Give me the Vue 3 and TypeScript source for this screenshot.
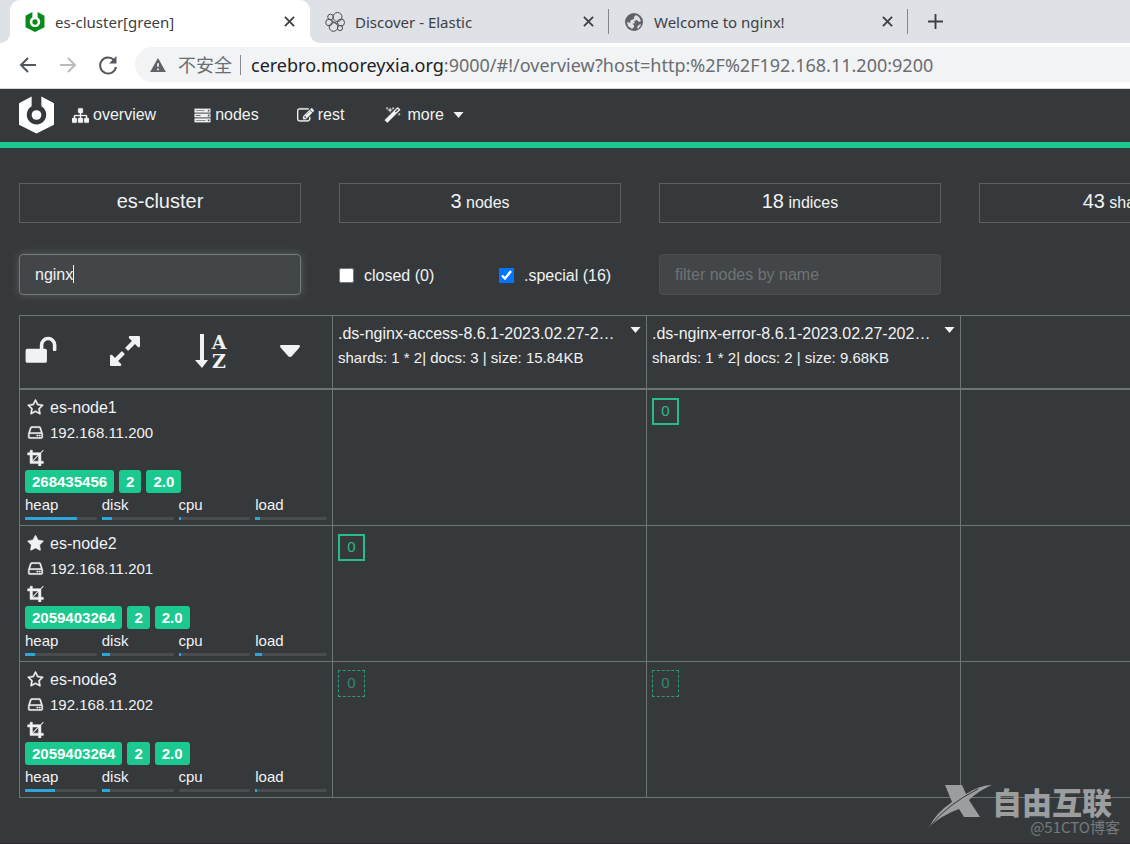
<script setup lang="ts">
import { ref } from 'vue'

interface Meter { label: string; value: number }
interface EsNode {
  name: string
  master: boolean
  ip: string
  tags: string[]
  meters: Meter[]
  shards: Array<'primary' | 'replica' | null>
}

const icons: Record<string, string> = {
  sitemap: 'M1792 1248v320q0 40-28 68t-68 28h-320q-40 0-68-28t-28-68v-320q0-40 28-68t68-28h96v-192h-512v192h96q40 0 68 28t28 68v320q0 40-28 68t-68 28h-320q-40 0-68-28t-28-68v-320q0-40 28-68t68-28h96v-192h-512v192h96q40 0 68 28t28 68v320q0 40-28 68t-68 28h-320q-40 0-68-28t-28-68v-320q0-40 28-68t68-28h96v-192q0-52 38-90t90-38h512v-192h-96q-40 0-68-28t-28-68v-320q0-40 28-68t68-28h320q40 0 68 28t28 68v320q0 40-28 68t-68 28h-96v192h512q52 0 90 38t38 90v192h96q40 0 68 28t28 68z',
  server: 'M64 192H1728V576H64ZM192 340V428H1088V340ZM1456 290V478H1640V290ZM64 704H1728V1088H64ZM192 852V940H704V852ZM1456 802V990H1640V802ZM64 1216H1728V1600H64ZM192 1364V1452H1216V1364ZM1456 1314V1502H1640V1314Z',
  edit: 'M888 1184l116-116-152-152-116 116v56h96v96h56zm440-720q-16-16-33 1l-350 350q-17 17-1 33t33-1l350-350q17-17 1-33zm80 594v190q0 119-84.5 203.5t-203.5 84.5h-832q-119 0-203.5-84.5t-84.5-203.5v-832q0-119 84.5-203.5t203.5-84.5h832q63 0 117 25 15 7 18 23 3 17-9 29l-49 49q-14 14-32 8-23-6-45-6h-832q-66 0-113 47t-47 113v832q0 66 47 113t113 47h832q66 0 113-47t47-113v-126q0-13 9-22l64-64q15-15 35-7t20 29zm-96-738l288 288-672 672h-288v-288zm444 132l-92 92-288-288 92-92q28-28 68-28t68 28l152 152q28 28 28 68t-28 68z',
  magic: 'M1254 581l293-293-107-107-293 293zm447-293q0 27-18 45l-1286 1286q-18 18-45 18t-45-18l-198-198q-18-18-18-45t18-45l1286-1286q18-18 45-18t45 18l198 198q18 18 18 45zm-1351-190l98 30-98 30-30 98-30-98-98-30 98-30 30-98zm350 162l196 60-196 60-60 196-60-196-196-60 196-60 60-196zm930 478l98 30-98 30-30 98-30-98-98-30 98-30 30-98zm-640-640l98 30-98 30-30 98-30-98-98-30 98-30 30-98z',
  unlock: 'M1728 576v256q0 26-19 45t-45 19h-64q-26 0-45-19t-19-45v-256q0-106-75-181t-181-75-181 75-75 181v192h96q40 0 68 28t28 68v576q0 40-28 68t-68 28h-960q-40 0-68-28t-28-68v-576q0-40 28-68t68-28h672v-192q0-185 131.5-316.5t316.5-131.5 316.5 131.5 131.5 316.5z',
  expand: 'M883 1056q0 13-10 23l-332 332 144 144q19 19 19 45t-19 45-45 19h-448q-26 0-45-19t-19-45v-448q0-26 19-45t45-19 45 19l144 144 332-332q10-10 23-10t23 10l114 114q10 10 10 23zm781-864v448q0 26-19 45t-45 19-45-19l-144-144-332 332q-10 10-23 10t-23-10l-114-114q-10-10-10-23t10-23l332-332-144-144q-19-19-19-45t19-45 45-19h448q26 0 45 19t19 45z',
  starO: 'M1201 1004l306-297-422-62-189-382-189 382-422 62 306 297-73 421 378-199 377 199zm527-357q0 22-26 48l-363 354 86 500q1 7 1 20 0 50-41 50-19 0-40-12l-449-236-449 236q-22 12-40 12-21 0-31.5-14.5t-10.5-35.5q0-6 2-20l86-500-364-354q-25-27-25-48 0-37 56-46l502-73 225-455q19-41 49-41t49 41l225 455 502 73q56 9 56 46z',
  star: 'M1728 647q0 22-26 48l-363 354 86 500q1 7 1 20 0 21-10.5 35.5t-30.5 14.5q-19 0-40-12l-449-236-449 236q-22 12-40 12-21 0-31.5-14.5t-10.5-35.5q0-6 2-20l86-500-364-354q-25-27-25-48 0-37 56-46l502-73 225-455q19-41 49-41t49 41l225 455 502 73q56 9 56 46z',
  hdd: 'M1168 1216q0 33-23.5 56.5t-56.5 23.5-56.5-23.5-23.5-56.5 23.5-56.5 56.5-23.5 56.5 23.5 23.5 56.5zm256 0q0 33-23.5 56.5t-56.5 23.5-56.5-23.5-23.5-56.5 23.5-56.5 56.5-23.5 56.5 23.5 23.5 56.5zm112 160v-320q0-13-9.5-22.5t-22.5-9.5h-1216q-13 0-22.5 9.5t-9.5 22.5v320q0 13 9.5 22.5t22.5 9.5h1216q13 0 22.5-9.5t9.5-22.5zm-1230-480h1180l-157-482q-4-13-16-21.5t-26-8.5h-782q-14 0-26 8.5t-16 21.5zm1358 160v320q0 66-47 113t-113 47h-1216q-66 0-113-47t-47-113v-320q0-25 16-75l197-606q17-53 63-86t101-33h782q55 0 101 33t63 86l197 606q16 50 16 75z',
  crop: 'M621 1280h595v-595zm-45-45l595-595h-595v595zm1152 77v192q0 14-9 23t-23 9h-224v224q0 14-9 23t-23 9h-192q-14 0-23-9t-9-23v-224h-864q-14 0-23-9t-9-23v-864h-224q-14 0-23-9t-9-23v-192q0-14 9-23t23-9h224v-224q0-14 9-23t23-9h192q14 0 23 9t9 23v224h851l246-247q10-9 23-9t23 9q9 10 9 23t-9 23l-247 246v851h224q14 0 23 9t9 23z',
}

const tabs = [
  { title: 'es-cluster[green]', icon: 'cerebro', active: true },
  { title: 'Discover - Elastic', icon: 'elastic', active: false },
  { title: 'Welcome to nginx!', icon: 'globe', active: false },
]

const links = [
  { text: 'overview', icon: 'sitemap' },
  { text: 'nodes', icon: 'server' },
  { text: 'rest', icon: 'edit' },
]

const stats = [
  { count: '3', unit: 'nodes' },
  { count: '18', unit: 'indices' },
  { count: '43', unit: 'shards' },
]

const indices = [
  { name: '.ds-nginx-access-8.6.1-2023.02.27-2…', info: 'shards: 1 * 2| docs: 3 | size: 15.84KB' },
  { name: '.ds-nginx-error-8.6.1-2023.02.27-202…', info: 'shards: 1 * 2| docs: 2 | size: 9.68KB' },
]

const meters = (heap: number, disk: number, cpu: number, load: number): Meter[] => [
  { label: 'heap', value: heap },
  { label: 'disk', value: disk },
  { label: 'cpu', value: cpu },
  { label: 'load', value: load },
]

const nodes: EsNode[] = [
  { name: 'es-node1', master: false, ip: '192.168.11.200', tags: ['268435456', '2', '2.0'], meters: meters(73, 14, 3, 6), shards: [null, 'primary'] },
  { name: 'es-node2', master: true, ip: '192.168.11.201', tags: ['2059403264', '2', '2.0'], meters: meters(14, 12, 3, 9), shards: ['primary', null] },
  { name: 'es-node3', master: false, ip: '192.168.11.202', tags: ['2059403264', '2', '2.0'], meters: meters(42, 12, 0, 3), shards: ['replica', 'replica'] },
]

const indexFilter = ref('nginx')
const nodeFilter = ref('')
const closed = ref(false)
const special = ref(true)
</script>

<template>
  <div class="page">
    <header class="browser">
      <div class="tabs">
        <div v-for="tab in tabs" :key="tab.title" class="tab" :class="{ active: tab.active }">
          <svg v-if="tab.icon === 'cerebro'" class="favicon" viewBox="0 0 36 38">
            <path fill="#0b8a1c" d="M13 0v10a10 10 0 1 0 10 0V0l13 7v22l-18 9L0 29V7z" />
            <circle cx="18" cy="19" r="5" fill="#0b8a1c" />
          </svg>
          <svg v-else-if="tab.icon === 'elastic'" class="favicon outline" viewBox="0 0 20 20">
            <circle cx="12.500" cy="5" r="4.500" />
            <circle cx="5.500" cy="5" r="2.800" />
            <circle cx="4" cy="10.500" r="3.300" />
            <circle cx="8.500" cy="15" r="4.300" />
            <circle cx="15" cy="16" r="2.600" />
            <circle cx="16" cy="10.500" r="3.500" />
            <path d="M7 9l6 3" />
          </svg>
          <svg v-else class="favicon" viewBox="0 0 20 20">
            <circle cx="10" cy="10" r="9" fill="#5f6368" />
            <path fill="#dee1e6" d="M12 3l3 2 2 4-2 1-2-2-3 1 1 2-3 1-2-2 1-2 3-1V5zM3 10l4 1 3 2v2l-2 2-4-3zM16 12l1 1-3 4-1-2z" />
          </svg>
          <span class="tab-title">{{ tab.title }}</span>
          <button class="plain" :aria-label="'Close ' + tab.title">
            <svg class="close" viewBox="0 0 12 12"><path d="M1 1l10 10M11 1L1 11" /></svg>
          </button>
        </div>
        <button class="plain new-tab" aria-label="New tab">
          <svg viewBox="0 0 16 16"><path d="M8 0v16M0 8h16" /></svg>
        </button>
      </div>
      <div class="toolbar">
        <button class="plain" aria-label="Back">
          <svg class="tool" viewBox="0 0 20 20"><path d="M18 10H3M10 3l-7 7 7 7" /></svg>
        </button>
        <button class="plain faded" aria-label="Forward">
          <svg class="tool" viewBox="0 0 20 20"><path d="M2 10h15M10 3l7 7-7 7" /></svg>
        </button>
        <button class="plain" aria-label="Reload">
          <svg class="tool" viewBox="0 0 20 20"><path d="M16 5a8 8 0 1 0 2 7" /><path class="solid" d="M18.500 1v7.500H11z" /></svg>
        </button>
        <div class="omnibox">
          <svg class="warning" viewBox="0 0 18 16"><path fill="#5f6368" d="M9 0l9 16H0z" /><path stroke="#f1f3f4" stroke-width="2" d="M9 6v4M9 12v2" /></svg>
          <span class="insecure">不安全</span>
          <span class="divider"></span>
          <span class="url"><b>cerebro.mooreyxia.org</b>:9000/#!/overview?host=http:%2F%2F192.168.11.200:9200</span>
        </div>
      </div>
    </header>

    <nav class="navbar">
      <a href="#" class="brand" aria-label="Cerebro">
        <svg viewBox="0 0 36 38">
          <path fill="#fff" d="M13 0v10a10 10 0 1 0 10 0V0l13 7v22l-18 9L0 29V7z" />
          <circle cx="18" cy="19" r="5" fill="#fff" />
        </svg>
      </a>
      <a v-for="link in links" :key="link.text" href="#" class="nav-link">
        <svg class="icon" viewBox="0 0 1792 1792"><path fill-rule="evenodd" :d="icons[link.icon]" /></svg>
        {{ link.text }}
      </a>
      <a href="#" class="nav-link">
        <svg class="icon more-icon" viewBox="0 0 1792 1792"><path :d="icons.magic" /></svg>
        more
        <svg class="caret more-caret" viewBox="0 0 10 6"><path d="M0 0h10L5 6z" /></svg>
      </a>
    </nav>

    <main class="content">
      <section class="grid stats">
        <div class="stat"><span class="big">es-cluster</span></div>
        <div v-for="s in stats" :key="s.unit" class="stat"><span class="big">{{ s.count }}</span> {{ s.unit }}</div>
      </section>

      <section class="grid filters">
        <div class="field">
          <input v-model="indexFilter" class="text focused" type="text" aria-label="filter indices by name" />
          <span class="cursor"></span>
        </div>
        <div class="checks">
          <label><input v-model="closed" type="checkbox" />closed (0)</label>
          <label><input v-model="special" type="checkbox" />.special (16)</label>
        </div>
        <input v-model="nodeFilter" class="text" type="text" placeholder="filter nodes by name" aria-label="filter nodes by name" />
      </section>

      <table class="shards">
        <colgroup><col class="c-node" /><col class="c-index" /><col class="c-index" /><col /></colgroup>
        <thead>
          <tr>
            <th>
              <div class="actions">
                <button class="plain" aria-label="Unlock"><svg class="action" viewBox="32 32 1728 1728"><path :d="icons.unlock" /></svg></button>
                <button class="plain" aria-label="Expand"><svg class="action expand" viewBox="128 128 1536 1536"><path :d="icons.expand" /></svg></button>
                <button class="plain" aria-label="Sort">
                  <svg class="action sort" viewBox="0 0 32 34">
                    <path d="M5 0h4v26h4L7 34 0 26h5z" />
                    <text x="24" y="15" text-anchor="middle">A</text>
                    <text x="24" y="34" text-anchor="middle">Z</text>
                  </svg>
                </button>
                <button class="plain" aria-label="Options"><svg class="caret-large" viewBox="0 0 20 12"><path d="M1 0h18q2 1 0 3L12 11q-2 2-4 0L1 3q-2-2 0-3z" /></svg></button>
              </div>
            </th>
            <th v-for="index in indices" :key="index.name">
              <div class="index">
                <span class="index-name">{{ index.name }}</span>
                <button class="plain" aria-label="Index options"><svg class="caret" viewBox="0 0 10 6"><path d="M0 0h10L5 6z" /></svg></button>
              </div>
              <div class="index-info">{{ index.info }}</div>
            </th>
            <th></th>
          </tr>
        </thead>
        <tbody>
          <tr v-for="node in nodes" :key="node.name">
            <td>
              <div class="line name"><svg class="icon" viewBox="0 0 1792 1792"><path :d="node.master ? icons.star : icons.starO" /></svg>{{ node.name }}</div>
              <div class="line"><svg class="icon" viewBox="0 0 1792 1792"><path :d="icons.hdd" /></svg>{{ node.ip }}</div>
              <div class="line"><svg class="icon" viewBox="0 0 1792 1792"><path :d="icons.crop" /></svg></div>
              <div class="tags"><span v-for="tag in node.tags" :key="tag" class="tag">{{ tag }}</span></div>
              <div class="meters">
                <div v-for="m in node.meters" :key="m.label">
                  <div class="meter-label">{{ m.label }}</div>
                  <div class="meter"><div class="fill" :style="{ width: m.value + '%' }"></div></div>
                </div>
              </div>
            </td>
            <td v-for="(shard, i) in node.shards" :key="i">
              <div v-if="shard" class="shard" :class="shard">0</div>
            </td>
            <td></td>
          </tr>
        </tbody>
      </table>
    </main>

    <div class="watermark">
      <svg viewBox="0 0 64 44">
        <path d="M17 1h17l4 9Q52 1 64 1 50 7 41 16L52 33H36l-5-8Q14 31 1 43 8 29 24 18z" />
        <path class="slash" d="M2 42Q20 20 50 5" />
      </svg>
      <div>
        <div class="mark-name">自由互联</div>
        <div class="mark-by">@51CTO博客</div>
      </div>
    </div>
  </div>
</template>

<style>
body {
  margin: 0;
  background: #36393b;
}
</style>

<style scoped>
* {
  box-sizing: border-box;
}
.page {
  position: relative;
  min-height: 100vh;
  overflow: hidden;
  background: #36393b;
  color: #f0f2f3;
  font: 16px/24px "Liberation Sans", Arial, sans-serif;
  border-bottom: 1px solid #2c2527;
}
svg {
  display: block;
  flex: none;
  fill: currentColor;
}
.plain {
  display: flex;
  flex: none;
  padding: 0;
  border: 0;
  background: none;
  color: inherit;
}
.browser {
  background: #fff;
  color: #3c4043;
  border-bottom: 1px solid #d4d6d9;
  font-family: "Noto Sans", "Noto Sans CJK SC", sans-serif;
}
.tabs {
  display: flex;
  height: 43px;
  padding-left: 10px;
  background: #dee1e6;
}
.tab {
  display: flex;
  align-items: center;
  gap: 10px;
  width: 299px;
  padding: 0 15px;
  font-size: 15px;
  position: relative;
}
.tab.active {
  width: 300px;
  background: #fff;
  border-radius: 10px 10px 0 0;
}
.tab.active::before,
.tab.active::after {
  content: "";
  position: absolute;
  bottom: 0;
  width: 10px;
  height: 10px;
}
.tab.active::before {
  left: -10px;
  background: radial-gradient(circle at 0 0, #dee1e6 10px, #fff 10px);
}
.tab.active::after {
  right: -10px;
  background: radial-gradient(circle at 100% 0, #dee1e6 10px, #fff 10px);
}
.tab:not(.active)::after {
  content: "";
  position: absolute;
  right: 0;
  top: 9px;
  width: 1px;
  height: 25px;
  background: #84878c;
}
.favicon {
  width: 20px;
  height: 20px;
}
.outline {
  fill: none;
  stroke: #4a4d51;
  stroke-width: 1;
}
.tab-title {
  flex: 1;
  white-space: nowrap;
}
.close {
  width: 11px;
  height: 11px;
  stroke: #3c4043;
  stroke-width: 2;
}
.new-tab {
  align-items: center;
  padding-left: 20px;
}
.new-tab svg {
  width: 15px;
  height: 15px;
  stroke: #3c4043;
  stroke-width: 2;
}
.toolbar {
  display: flex;
  align-items: center;
  gap: 20px;
  height: 45px;
  padding: 0 0 2px 18px;
}
.tool {
  width: 20px;
  height: 20px;
  fill: none;
  stroke: #55595d;
  stroke-width: 2;
}
.tool .solid {
  fill: #55595d;
  stroke: none;
}
.faded .tool {
  stroke: #b9bbbe;
}
.omnibox {
  display: flex;
  flex: 1;
  align-items: center;
  height: 35px;
  margin-left: -3px;
  padding-left: 15px;
  border-radius: 18px 0 0 18px;
  background: #f1f3f4;
  color: #6a6d71;
  white-space: nowrap;
  font-size: 18px;
}
.warning {
  width: 16px;
  height: 14px;
  margin-right: 12px;
}
.divider {
  width: 1px;
  height: 20px;
  margin: 0 10px 0 8px;
  background: #85888c;
}
.url b {
  color: #202124;
  font-weight: 400;
}
.navbar {
  display: flex;
  align-items: center;
  gap: 38px;
  height: 59px;
  padding: 0 19px 1px;
  border-bottom: 6px solid #1bc98e;
}
.brand {
  color: inherit;
  margin-right: -20px;
}
.brand svg {
  width: 35px;
  height: 38px;
}
.nav-link {
  display: flex;
  align-items: center;
  gap: 4px;
  color: inherit;
  text-decoration: none;
}
.icon {
  width: 17px;
  height: 17px;
}
.nav-link .icon {
  stroke: currentColor;
  stroke-width: 30;
}
.more-icon {
  margin: 0 2px;
}
.caret {
  width: 11px;
  height: 6px;
}
.more-caret {
  margin-left: 5px;
}
.content {
  padding: 35px 19px 0;
}
.grid {
  display: grid;
  grid-template-columns: repeat(4, minmax(282px, 1fr));
  column-gap: 38px;
}
.stat {
  height: 40px;
  border: 1px solid #5c6062;
  text-align: center;
  line-height: 35px;
}
.big {
  font-size: 20px;
}
.filters {
  margin-top: 31px;
  align-items: center;
}
.field {
  position: relative;
}
.text {
  display: block;
  width: 100%;
  height: 41px;
  padding: 0 15px;
  border: 1px solid #4b4f51;
  border-radius: 4px;
  background: #434648;
  color: #f0f2f3;
  font: inherit;
  outline: none;
}
.text::placeholder {
  color: #6f7375;
}
.focused {
  border-color: #757a7b;
  box-shadow: 0 0 8px #5c6062;
  caret-color: transparent;
}
.cursor {
  position: absolute;
  left: 54px;
  top: 11px;
  width: 1px;
  height: 18px;
  background: #fff;
}
.checks {
  display: grid;
  grid-template-columns: 160px auto;
  padding-top: 2px;
}
.checks label {
  display: flex;
  align-items: center;
}
.checks input {
  width: 15px;
  height: 15px;
  margin: 0 10px 0 0;
}
.shards {
  width: 100%;
  min-width: 1254px;
  margin-top: 20px;
  table-layout: fixed;
  border-collapse: separate;
  border-spacing: 0;
  border: 1px solid #6f7475;
  border-width: 1px 0 0 1px;
}
.c-node {
  width: 313px;
}
.c-index {
  width: 314px;
}
th,
td {
  padding: 5px;
  border: 1px solid #6f7475;
  border-width: 0 1px 1px 0;
  vertical-align: top;
  text-align: left;
  font-weight: 400;
}
th {
  height: 74px;
  padding-top: 6px;
  border-bottom-width: 2px;
}
.actions {
  display: grid;
  grid-template-columns: 85px 85px 85px auto;
  align-items: center;
  height: 58px;
}
.action {
  width: 32px;
  height: 32px;
}
.expand {
  width: 30px;
  height: 30px;
}
.sort {
  height: 34px;
  overflow: visible;
}
.sort text {
  font: bold 19px "DejaVu Serif", serif;
}
.caret-large {
  width: 20px;
  height: 12px;
}
.index {
  display: flex;
  justify-content: space-between;
}
.index .plain {
  height: 11px;
  align-items: flex-end;
}
.index-name {
  white-space: nowrap;
}
.index-info {
  font-size: 15px;
}
.line {
  display: flex;
  align-items: center;
  gap: 6px;
  height: 25px;
  padding-left: 2px;
  font-size: 15px;
}
.line .icon {
  stroke: currentColor;
  stroke-width: 50;
}
.name {
  font-size: 16px;
}
.tags {
  display: flex;
  gap: 5px;
}
.tag {
  padding: 0 7px;
  border-radius: 3px;
  background: #1bc98e;
  color: #fff;
  font-size: 15px;
  font-weight: 700;
  line-height: 23px;
}
.meters {
  display: grid;
  grid-template-columns: repeat(4, 1fr);
  gap: 5px;
}
.meter-label {
  font-size: 15px;
}
.meter {
  height: 3px;
  border-radius: 2px;
  background: #4a4d50;
}
.fill {
  height: 3px;
  background: #2fa5d8;
}
.shard {
  width: 27px;
  height: 27px;
  margin-top: 3px;
  border: 2px solid #2abb8b;
  color: #2abb8b;
  font-size: 15px;
  text-align: center;
  line-height: 22px;
}
.replica {
  border: 1px dashed #2f9878;
  color: #32886f;
  line-height: 24px;
}
.watermark {
  position: absolute;
  right: 10px;
  bottom: 7px;
  display: flex;
  color: #9b9d9f;
  font-family: "Noto Sans CJK SC", sans-serif;
}
.watermark svg {
  width: 64px;
  height: 44px;
}
.slash {
  fill: none;
  stroke: #36393b;
}
.mark-name {
  margin-right: 8px;
  font-size: 30px;
  line-height: 34px;
  font-weight: 900;
}
.mark-by {
  font-size: 15px;
  line-height: 18px;
  text-align: right;
  color: #77797b;
}
</style>
